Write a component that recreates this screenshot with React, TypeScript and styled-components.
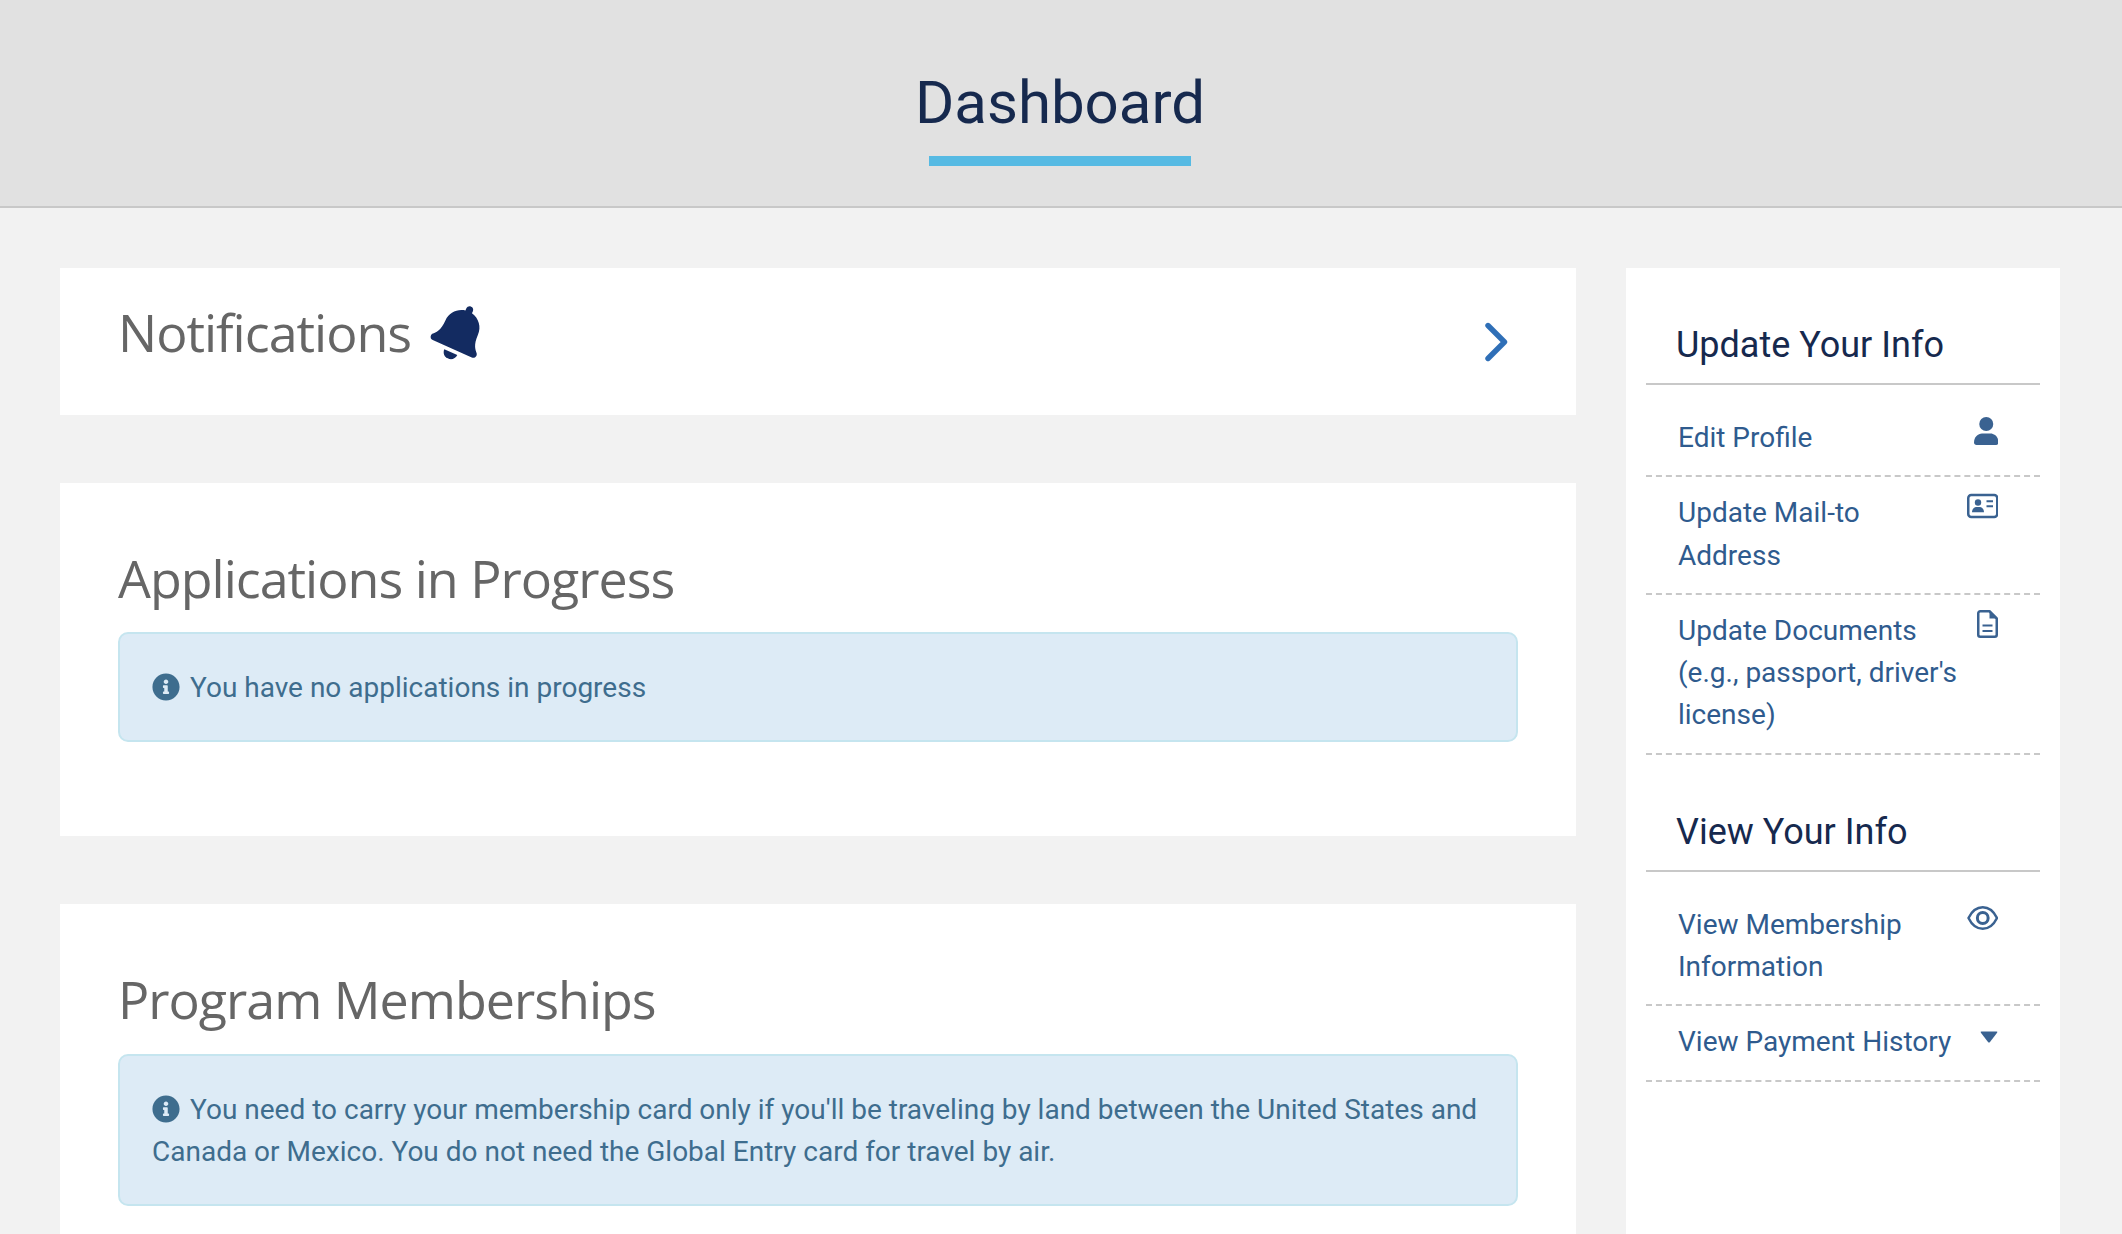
import React from 'react';
import styled, { createGlobalStyle } from 'styled-components';
import { FaBell, FaInfoCircle } from 'react-icons/fa';

const GlobalStyle = createGlobalStyle`
  html, body {
    margin: 0;
    padding: 0;
    height: 100%;
    overflow: hidden;
    background: #F2F2F2;
    font-family: Roboto, "Liberation Sans", sans-serif;
  }
  #root {
    height: 100%;
  }
`;

const Page = styled.div`
  height: 1234px;
  display: flex;
  flex-direction: column;
  overflow: hidden;
`;

const Header = styled.header`
  height: 206px;
  flex: none;
  background: #E1E1E1;
  border-bottom: 2px solid #C8C8C8;
  padding-right: 2px;
  display: flex;
  flex-direction: column;
  align-items: center;
`;

const PageTitle = styled.h1`
  margin: 68px 0 0;
  font-size: 60px;
  line-height: 70px;
  font-weight: 400;
  color: #16294E;
`;

const TitleBar = styled.div`
  width: 262px;
  height: 10px;
  margin-top: 18px;
  background: #56BAE3;
`;

const Content = styled.div`
  flex: 1;
  display: grid;
  grid-template-columns: 1516px 434px;
  column-gap: 50px;
  padding: 60px 62px 0 60px;
`;

const Main = styled.main`
  display: flex;
  flex-direction: column;
  gap: 68px;
`;

const NoticeCard = styled.section`
  height: 147px;
  flex: none;
  background: #FFFFFF;
  display: flex;
  justify-content: space-between;
  align-items: flex-start;
  padding: 0 68px 0 58px;
  box-sizing: border-box;
`;

const Card = styled.section<{ $last?: boolean }>`
  background: #FFFFFF;
  padding: 57px 58px ${(p) => (p.$last ? '0' : '94px')};
  ${(p) => p.$last && 'flex: 1;'}
`;

const SectionTitle = styled.h2<{ $gap?: number }>`
  margin: 0 0 ${(p) => p.$gap ?? 17}px;
  font-family: "Open Sans", "Noto Sans", sans-serif;
  font-size: 52px;
  letter-spacing: -1px;
  line-height: 75px;
  font-weight: 400;
  color: #666666;
`;

const NoticeTitle = styled(SectionTitle)`
  display: flex;
  align-items: center;
  gap: 20px;
  margin: 26px 0 0;
`;

const BellIcon = styled(FaBell)`
  width: 57px;
  height: 57px;
  margin-top: 1px;
  color: #132B61;
  transform: rotate(24deg);
`;

const Chevron = styled.svg`
  width: 24px;
  height: 40px;
  margin-top: 54px;
  fill: none;
  stroke: #2F6FB7;
  stroke-width: 5.4;
  stroke-linecap: round;
  stroke-linejoin: round;
`;

const Alert = styled.div`
  background: #DDEBF6;
  border: 2px solid #C5E5EF;
  border-radius: 10px;
  padding: 33px 32px 31px;
  font-size: 28px;
  line-height: 42px;
  color: #3E6D8E;
`;

const InfoIcon = styled(FaInfoCircle)`
  width: 28px;
  height: 28px;
  margin-right: 10px;
  vertical-align: -4px;
`;

const Sidebar = styled.aside`
  background: #FFFFFF;
  padding: 0 20px;
`;

const SideTitle = styled.h3`
  margin: 52px 0 0;
  padding: 0 0 13px 30px;
  font-size: 36px;
  line-height: 50px;
  font-weight: 400;
  color: #16294E;
  border-bottom: 2px solid #C8C8C8;
`;

const SideList = styled.ul`
  list-style: none;
  margin: 0;
  padding: 17px 0 0;
`;

const SideItem = styled.li`
  display: flex;
  justify-content: space-between;
  align-items: flex-start;
  padding: 15px 42px 16px 32px;
  border-bottom: 2px dashed #C8C8C8;
  font-size: 28px;
  line-height: 42.3px;
  color: #2F5B8E;
`;

const SideLabel = styled.span`
  width: 282px;
`;

const SideIcon = styled.svg`
  flex: none;
  height: 28px;
  width: auto;
  color: #3A6291;
`;

const UserIcon = () => (
  <SideIcon viewBox="0 0 24.5 28">
    <circle cx="12.25" cy="7" r="7" fill="currentColor" />
    <path
      fill="currentColor"
      d="M0 25.5C0 20 4 16.5 8 16.5h8.5c4 0 8 3.5 8 9 0 1.5-1 2.5-2.5 2.5H2.5C1 28 0 27 0 25.5z"
    />
  </SideIcon>
);

const CardIcon = () => (
  <SideIcon viewBox="0 -1.75 31.5 28">
    <rect x="1.25" y="1.25" width="29" height="22" rx="3" fill="none" stroke="currentColor" strokeWidth="2.5" />
    <circle cx="11" cy="8.7" r="3.2" fill="currentColor" />
    <path fill="currentColor" d="M5 18.5c0-3.5 2.5-5.3 4-5.3h4c1.5 0 4 1.8 4 5.3z" />
    <path stroke="currentColor" strokeWidth="2" d="M19.5 7.5H26M19.5 12.5H26" />
  </SideIcon>
);

const FileIcon = () => (
  <SideIcon viewBox="0 0 21 28">
    <path
      fill="none"
      stroke="currentColor"
      strokeWidth="2.5"
      strokeLinejoin="round"
      d="M3.25 1.25h9.25l7.25 7.25v16.25a2 2 0 0 1-2 2H3.25a2 2 0 0 1-2-2V3.25a2 2 0 0 1 2-2z"
    />
    <path fill="currentColor" d="M12.5 1.25V8.5h7.25z" />
    <path stroke="currentColor" strokeWidth="2.2" d="M5.5 15.5h10M5.5 21h10" />
  </SideIcon>
);

const EyeIcon = () => (
  <SideIcon viewBox="0 -1.75 31.5 28">
    <path
      fill="none"
      stroke="currentColor"
      strokeWidth="2.5"
      strokeLinejoin="round"
      d="M1.5 12.25C5 5 10 1.5 15.75 1.5S26.500 5 30 12.250C26.500 19.500 21.500 23 15.750 23S5 19.500 1.500 12.250z"
    />
    <circle cx="15.75" cy="12.25" r="5.4" fill="none" stroke="currentColor" strokeWidth="3" />
  </SideIcon>
);

const CaretIcon = () => (
  <SideIcon viewBox="0 0 18 28">
    <path
      fill="currentColor"
      d="M1.500 10.500h15q1.500 0 .6 1.200L10 21q-1 1-2 0L.9 11.700q-.9-1.200.6-1.200z"
    />
  </SideIcon>
);

const App: React.FC = () => {
  return (
    <Page>
      <GlobalStyle />
      <Header>
        <PageTitle>Dashboard</PageTitle>
        <TitleBar />
      </Header>
      <Content>
        <Main>
          <NoticeCard>
            <NoticeTitle>
              Notifications <BellIcon />
            </NoticeTitle>
            <Chevron viewBox="0 0 24 40">
              <path d="M4 3.500L20.500 20 4 36.500" />
            </Chevron>
          </NoticeCard>
          <Card>
            <SectionTitle>Applications in Progress</SectionTitle>
            <Alert>
              <InfoIcon />
              You have no applications in progress
            </Alert>
          </Card>
          <Card $last>
            <SectionTitle $gap={18}>Program Memberships</SectionTitle>
            <Alert>
              <InfoIcon />
              You need to carry your membership card only if you'll be traveling by land between the United States and Canada or Mexico. You do not need the Global Entry card for travel by air.
            </Alert>
          </Card>
        </Main>
        <Sidebar>
          <SideTitle>Update Your Info</SideTitle>
          <SideList>
            <SideItem>
              <SideLabel>Edit Profile</SideLabel>
              <UserIcon />
            </SideItem>
            <SideItem>
              <SideLabel>Update Mail-to Address</SideLabel>
              <CardIcon />
            </SideItem>
            <SideItem>
              <SideLabel>Update Documents (e.g., passport, driver's license)</SideLabel>
              <FileIcon />
            </SideItem>
          </SideList>
          <SideTitle>View Your Info</SideTitle>
          <SideList>
            <SideItem>
              <SideLabel>View Membership Information</SideLabel>
              <EyeIcon />
            </SideItem>
            <SideItem>
              <SideLabel>View Payment History</SideLabel>
              <CaretIcon />
            </SideItem>
          </SideList>
        </Sidebar>
      </Content>
    </Page>
  );
};

export default App;
